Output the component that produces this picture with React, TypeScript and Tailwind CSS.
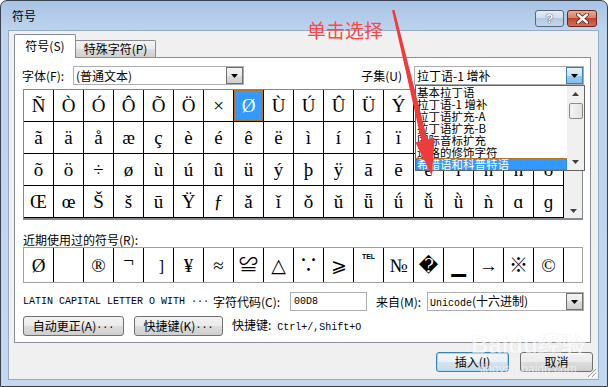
import React from 'react'

const rows = [
  ['Ñ', 'Ò', 'Ó', 'Ô', 'Õ', 'Ö', '×', 'Ø', 'Ù', 'Ú', 'Û', 'Ü', 'Ý', 'Þ', 'ß', 'à', 'á', 'â'],
  ['ã', 'ä', 'å', 'æ', 'ç', 'è', 'é', 'ê', 'ë', 'ì', 'í', 'î', 'ï', 'ð', 'ñ', 'ò', 'ó', 'ô'],
  ['õ', 'ö', '÷', 'ø', 'ù', 'ú', 'û', 'ü', 'ý', 'þ', 'ÿ', 'ā', 'ē', 'ě', 'ī', 'ń', 'ň', 'ō'],
  ['Œ', 'œ', 'Š', 'š', 'ū', 'Ÿ', 'ƒ', 'ǎ', 'ǐ', 'ǒ', 'ǔ', 'ǖ', 'ǘ', 'ǚ', 'ǜ', 'ǹ', 'ɑ', 'ɡ'],
]

const recent = ['Ø', '', '®', '¬', ']', '¥', '≈', '≌', '△', '∵', '⩾', '℡', '№', '\uFFFD', '▁', '→', '※', '©']

const subsets = ['基本拉丁语', '拉丁语-1 增补', '拉丁语扩充-A', '拉丁语扩充-B', '国际音标扩充', '进格的修饰字符', '希腊语和科普特语']

const btn = 'h-[20px] flex items-center justify-center rounded-[3px] border border-[#707070] bg-[linear-gradient(#f2f2f2,#ebebeb_50%,#dddddd_50%,#cfcfcf)]'

function Triangle({ up }: { up?: boolean }) {
  return (
    <svg width="7" height="4" viewBox="0 0 7 4">
      <path d={up ? 'M0 4h7L3.5 0z' : 'M0 0h7L3.5 4z'} fill="#404040" />
    </svg>
  )
}

function DropBtn({ hot }: { hot?: boolean }) {
  return (
    <div
      className={
        hot
          ? 'w-[17px] h-[17px] flex items-center justify-center border border-[#3c7fb1] bg-[linear-gradient(#e3f2fc,#c5e4f8_50%,#9ccdf0_50%,#86bde8)]'
          : 'w-[17px] h-[17px] flex items-center justify-center border border-[#707070] bg-[linear-gradient(#f2f2f2,#ebebeb_50%,#dddddd_50%,#cfcfcf)]'
      }
    >
      <svg width="7" height="4" viewBox="0 0 7 4">
        <path d="M0 0h7L3.5 4z" fill="#000" />
      </svg>
    </div>
  )
}

function RecentCell({ c }: { c: string }) {
  // a few glyphs sit off-centre in the original font
  if (c === '℡')
    return <span className="self-start mt-[5px] font-['Liberation_Sans',sans-serif] font-bold text-[7px]">TEL</span>
  if (c === '¬') return <span className="-mt-[10px]">{c}</span>
  if (c === ']') return <span className="mt-[4px] ml-[6px] text-[16px]">{c}</span>
  return <>{c}</>
}

export default function App() {
  return (
    <div className="relative w-[608px] h-[387px] overflow-hidden bg-white font-['Noto_Sans_CJK_SC',sans-serif] text-[12px] text-black leading-none">
      <div className="w-[608px] h-[387px] rounded-t-[7px] border border-[#38414d] bg-[linear-gradient(#a7c3e5,#bfd4ed_30px,#c4d8ef)] flex flex-col">
        {/* Title bar */}
        <div className="h-[29px] flex items-start justify-between">
          <span className="pl-[11px] pt-[9px] text-[12px]">符号</span>
          <div className="flex gap-[3px] pt-[9px] pr-[10px]">
            <div className="w-[29px] h-[17px] rounded-[3px] border border-[#56667f] bg-[linear-gradient(#e4ecf6,#cfdcec_50%,#b4c8e0_50%,#c4d6ea)] flex items-center justify-center">
              <span className="font-['Liberation_Sans',sans-serif] font-bold text-[13px] text-white [text-shadow:0_0_1px_#2b3a52,0_0_1px_#2b3a52]">?</span>
            </div>
            <div className="w-[30px] h-[17px] rounded-[3px] border border-[#6a2419] bg-[linear-gradient(#e9ab9c,#d77a64_50%,#c2432c_50%,#d0705a)] flex items-center justify-center">
              <svg width="13" height="11" viewBox="0 0 13 11">
                <path d="M2 1.5l9 8M11 1.5l-9 8" stroke="#5a1d14" strokeWidth="4" strokeLinecap="round" />
                <path d="M2 1.5l9 8M11 1.5l-9 8" stroke="#fff" strokeWidth="2.4" strokeLinecap="round" />
              </svg>
            </div>
          </div>
        </div>

        {/* Client area */}
        <div className="relative ml-[7px] w-[591px] h-[350px] bg-[#f0f0f0] border border-[#94abc6] pl-[5px] pt-[3px]">
          {/* Tabs */}
          <div className="flex items-end h-[23px]">
            <div className="relative z-10 -mb-[1px] w-[62px] h-[24px] bg-white border border-b-0 border-[#898c95] rounded-t-[2px] flex items-center justify-center pb-[2px]">
              符号(S)
            </div>
            <div className="w-[80px] h-[17px] border border-b-0 border-l-0 border-[#898c95] rounded-tr-[2px] bg-[linear-gradient(#f3f3f3,#ebebeb_50%,#dddddd_50%,#cfcfcf)] flex items-center justify-center">
              特殊字符(P)
            </div>
          </div>

          {/* Tab panel */}
          <div className="w-[577px] h-[286px] border border-[#898c95] bg-white pl-[8px]">
            <div className="w-[561px]">
              {/* Font row */}
              <div className="mt-[8px] h-[19px] flex items-center">
                <span className="w-[51px] -ml-[1px]">字体(F):</span>
                <div className="w-[171px] h-[19px] border border-[#abadb3] bg-white flex items-center justify-between pl-[2px]">
                  <span>(普通文本)</span>
                  <DropBtn />
                </div>
                <span className="ml-auto mr-[12px]">子集(U)</span>
                <div className="w-[170px] h-[19px] border border-[#abadb3] bg-white flex items-center justify-between pl-[2px]">
                  <span>拉丁语-1 增补</span>
                  <DropBtn hot />
                </div>
              </div>

              {/* Symbol grid */}
              <div className="mt-[4px] w-[560px] h-[131px] flex border border-b-2 border-[#828790]">
                <div className="w-[540px] flex flex-col">
                  {rows.map((r, ri) => (
                    <div key={ri} className="flex h-[32px]">
                      {r.map((c, ci) => {
                        const sel = ri === 0 && ci === 7
                        return (
                          <div
                            key={ci}
                            className="w-[30px] h-[32px] border-r border-b border-black flex items-center justify-center font-['Liberation_Serif','DejaVu_Serif',serif] text-[19px]"
                          >
                            {sel ? (
                              <div className="w-full h-full bg-[#3399ff] text-white border border-dotted border-[#b06a1f] flex items-center justify-center">
                                {c}
                              </div>
                            ) : (
                              c
                            )}
                          </div>
                        )
                      })}
                    </div>
                  ))}
                </div>
                <div className="w-[18px] bg-[#f0f0f0] flex flex-col justify-end items-center pb-[5px]">
                  <Triangle />
                </div>
              </div>

              {/* Recent */}
              <div className="mt-[13px] h-[14px] flex items-center">近期使用过的符号(R):</div>
              <div className="w-[560px] h-[36px] flex border border-[#a0a0a0]">
                {recent.map((c, i) => (
                  <div
                    key={i}
                    className="w-[30px] h-full border-r border-black flex items-center justify-center font-['Liberation_Serif','DejaVu_Serif','Noto_Sans_CJK_SC',serif] text-[19px]"
                  >
                    <RecentCell c={c} />
                  </div>
                ))}
              </div>

              {/* Info row */}
              <div className="mt-[9px] h-[19px] flex items-center">
                <span className="w-[190px] font-['Liberation_Mono',monospace] text-[10px]">LATIN CAPITAL LETTER O WITH ···</span>
                <span className="w-[77px]">字符代码(C):</span>
                <div className="w-[77px] h-[19px] border border-[#abadb3] bg-white flex items-center pl-[3px] font-['Liberation_Mono',monospace] text-[10px]">
                  00D8
                </div>
                <span className="ml-[9px] w-[51px]">来自(M):</span>
                <div className="w-[157px] h-[19px] border border-[#abadb3] bg-white flex items-center justify-between pl-[2px]">
                  <span>
                    <span className="font-['Liberation_Mono',monospace] text-[10px]">Unicode</span>(十六进制)
                  </span>
                  <DropBtn />
                </div>
              </div>

              {/* Buttons row */}
              <div className="mt-[5px] h-[20px] flex items-center">
                <div className={`${btn} w-[101px]`}>
                  自动更正(A)<span className="font-['Liberation_Mono',monospace] text-[10px]">...</span>
                </div>
                <div className={`${btn} w-[89px] ml-[10px]`}>
                  快捷键(K)<span className="font-['Liberation_Mono',monospace] text-[10px]">...</span>
                </div>
                <span className="ml-[9px]">
                  快捷键:<span className="font-['Liberation_Mono',monospace] text-[10px]"> Ctrl+/,Shift+O</span>
                </span>
              </div>
            </div>
          </div>

          {/* Dialog buttons */}
          <div className="mt-[9px] flex justify-end pr-[5px] gap-[11px]">
            <div className="w-[73px] h-[20px] flex items-center justify-center rounded-[3px] border border-[#3c7fb1] shadow-[inset_0_0_0_1px_#9fdcf8] bg-[linear-gradient(#f2f8fc,#e6f1f8_50%,#d6e4ee_50%,#c9d9e6)]">
              插入(I)
            </div>
            <div className={`${btn} w-[73px]`}>取消</div>
          </div>

          {/* Watermark */}
          <div className="absolute left-[462px] top-[302px] flex flex-col items-center text-white [text-shadow:0_0_1px_#c4c4c4] opacity-60 pointer-events-none">
            <span className="font-['Liberation_Sans',sans-serif] font-bold text-[24px]">Baidu经验</span>
            <span className="mt-[6px] font-['Liberation_Sans',sans-serif] text-[12px]">jingyan.baidu.com</span>
          </div>

          {/* Size grip */}
          <svg className="absolute right-[1px] bottom-[1px]" width="12" height="12" viewBox="0 0 12 12">
            <path d="M11 3L3 11M11 7L7 11" stroke="#a0a0a0" strokeWidth="1" />
            <path d="M12 4L4 12M12 8L8 12" stroke="#ffffff" strokeWidth="1" />
          </svg>
        </div>
      </div>

      {/* Open subset dropdown list */}
      <div className="absolute left-[415px] top-[85px] w-[170px] h-[86px] border border-[#646464] bg-white flex">
        <div className="w-[151px] flex flex-col">
          {subsets.map((s, i) =>
            i === subsets.length - 1 ? (
              <div key={s} className="h-[12px] bg-[#3399ff] text-white border border-dotted border-[#b06a1f] flex items-center text-[11.5px] leading-[11px]">
                {s}
              </div>
            ) : (
              <div key={s} className="h-[12px] pl-[1px] flex items-center text-[11.5px] leading-[11px]">
                {s}
              </div>
            ),
          )}
        </div>
        <div className="w-[17px] bg-[#f0f0f0] flex flex-col items-center">
          <div className="h-[16px] flex items-center">
            <Triangle up />
          </div>
          <div className="mt-[1px] w-[14px] h-[16px] rounded-[2px] border border-[#8a8a8a] bg-[linear-gradient(90deg,#f4f4f4,#e2e2e2)]" />
          <div className="mt-auto h-[16px] flex items-center">
            <Triangle />
          </div>
        </div>
      </div>

      {/* Annotation */}
      <span className="absolute left-[307px] top-[20px] text-[19px] text-[#ff4646]">单击选择</span>
      <svg className="absolute left-0 top-0 pointer-events-none" width="608" height="387" viewBox="0 0 608 387">
        <polygon points="392,10 394.5,10 427.5,140 421.5,141.5" fill="#ee3b3b" />
        <polygon points="432,176 415.5,142.5 434.5,137.5" fill="#ee3b3b" />
      </svg>
    </div>
  )
}
